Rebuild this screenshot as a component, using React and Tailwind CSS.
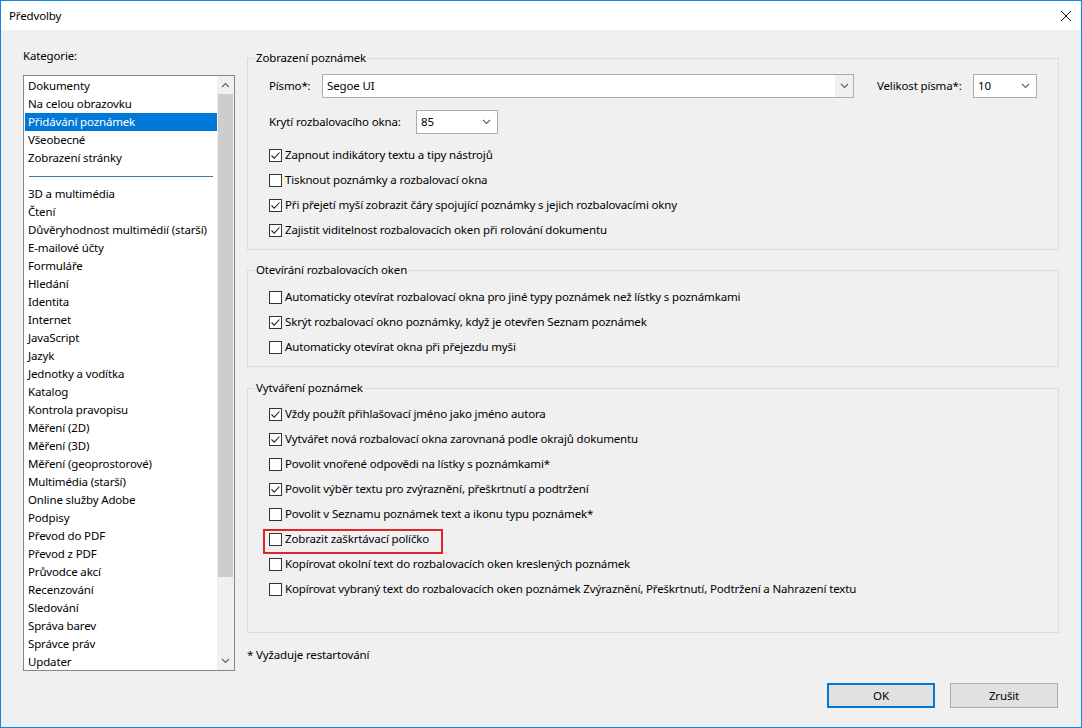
import React from "react";

const topItems = ["Dokumenty", "Na celou obrazovku", "Přidávání poznámek", "Všeobecné", "Zobrazení stránky"];

const otherItems = [
  "3D a multimédia",
  "Čtení",
  "Důvěryhodnost multimédií (starší)",
  "E-mailové účty",
  "Formuláře",
  "Hledání",
  "Identita",
  "Internet",
  "JavaScript",
  "Jazyk",
  "Jednotky a vodítka",
  "Katalog",
  "Kontrola pravopisu",
  "Měření (2D)",
  "Měření (3D)",
  "Měření (geoprostorové)",
  "Multimédia (starší)",
  "Online služby Adobe",
  "Podpisy",
  "Převod do PDF",
  "Převod z PDF",
  "Průvodce akcí",
  "Recenzování",
  "Sledování",
  "Správa barev",
  "Správce práv",
  "Updater",
];

// small chevron used in combos and the scrollbar
function Chevron({ up }) {
  return (
    <svg width="9" height="6" viewBox="0 0 9 6" className="block">
      <path
        d={up ? "M1 5 L4.5 1.5 L8 5" : "M1 1 L4.5 4.5 L8 1"}
        fill="none"
        stroke="#606060"
        strokeWidth="1.1"
      />
    </svg>
  );
}

function Checkbox({ checked, label }) {
  return (
    <div className="flex items-center h-[18px]">
      <div className="w-[13px] h-[13px] border border-[#333333] bg-white flex items-center justify-center shrink-0">
        {checked && (
          <svg width="11" height="11" viewBox="0 0 11 11" className="block">
            <path d="M1.5 5.5 L4.2 8.2 L9.5 2.5" fill="none" stroke="#222222" strokeWidth="1.1" />
          </svg>
        )}
      </div>
      <span className="ml-[3px] whitespace-nowrap">{label}</span>
    </div>
  );
}

function Select({ value, className }) {
  return (
    <div className={`h-[24px] border border-[#acacac] bg-white flex items-center justify-between pl-[4px] pr-[6px] ${className}`}>
      <span>{value}</span>
      <Chevron />
    </div>
  );
}

function Group({ title, className, children }) {
  return (
    <fieldset className={`border border-[#dcdcdc] ${className}`}>
      <legend className="ml-[7px] px-[1px] leading-[18px]">{title}</legend>
      {children}
    </fieldset>
  );
}

export default function App() {
  return (
    <div className="w-[1082px] h-[728px] border border-[#1883d7] bg-[#f0f0f0] flex flex-col text-[11.5px] tracking-[-0.15px] leading-[18px] text-black font-['Noto_Sans',sans-serif] overflow-hidden">
      {/* Title bar */}
      <div className="h-[29px] bg-white flex items-center justify-between pl-[8px] pr-[9px] shrink-0">
        <span>Předvolby</span>
        <svg width="12" height="12" viewBox="0 0 12 12" className="block">
          <path d="M1 1 L11 11 M11 1 L1 11" stroke="#111111" strokeWidth="1" />
        </svg>
      </div>

      <div className="flex pl-[22px] pt-[17px]">
        {/* Categories */}
        <div className="w-[212px] flex flex-col">
          <div className="h-[18px] mb-[10px]">Kategorie:</div>
          <div className="h-[596px] border border-[#828790] bg-white flex overflow-hidden">
            <div className="w-[193px] pt-[1px] overflow-hidden">
              {topItems.map((item, i) => (
                <div
                  key={item}
                  className={
                    i === 2
                      ? "h-[18px] ml-[1px] pl-[3px] bg-[#0078d7] text-white whitespace-nowrap"
                      : "h-[18px] pl-[4px] whitespace-nowrap"
                  }
                >
                  {item}
                </div>
              ))}
              <div className="h-[18px] flex items-center">
                <div className="ml-[5px] w-[184px] h-px bg-[#3a75b8]"></div>
              </div>
              {otherItems.map((item) => (
                <div key={item} className="h-[18px] pl-[4px] whitespace-nowrap">
                  {item}
                </div>
              ))}
            </div>
            <div className="w-[17px] bg-[#f0f0f0] flex flex-col">
              <div className="h-[18px] flex items-center justify-center">
                <Chevron up />
              </div>
              <div className="h-[483px] mx-[1px] bg-[#cdcdcd]"></div>
              <div className="flex-1"></div>
              <div className="h-[18px] flex items-center justify-center">
                <Chevron />
              </div>
            </div>
          </div>
        </div>

        {/* Settings */}
        <div className="w-[812px] ml-[12px] pt-[2px] flex flex-col">
          <Group title="Zobrazení poznámek">
            <div className="pl-[21px] pt-[7px] pb-[10px]">
              <div className="flex items-center h-[24px]">
                <span className="w-[53px]">Písmo*:</span>
                <div className="w-[532px] h-[24px] border border-[#acacac] bg-[#f0f0f0] flex">
                  <div className="flex-1 bg-white pl-[4px] flex items-center">Segoe UI</div>
                  <div className="w-[18px] flex items-center justify-center">
                    <Chevron />
                  </div>
                </div>
                <span className="ml-[23px] w-[96px] whitespace-nowrap">Velikost písma*:</span>
                <Select value="10" className="w-[64px]" />
              </div>
              <div className="flex items-center h-[24px] mt-[12px]">
                <span className="w-[147px] whitespace-nowrap">Krytí rozbalovacího okna:</span>
                <Select value="85" className="w-[82px]" />
              </div>
              <div className="mt-[12px] flex flex-col gap-[7px]">
                <Checkbox checked label="Zapnout indikátory textu a tipy nástrojů" />
                <Checkbox label="Tisknout poznámky a rozbalovací okna" />
                <Checkbox checked label="Při přejetí myší zobrazit čáry spojující poznámky s jejich rozbalovacími okny" />
                <Checkbox checked label="Zajistit viditelnost rozbalovacích oken při rolování dokumentu" />
              </div>
            </div>
          </Group>

          <Group title="Otevírání rozbalovacích oken" className="mt-[11px]">
            <div className="pl-[21px] pt-[9px] pb-[10px] flex flex-col gap-[7px]">
              <Checkbox label="Automaticky otevírat rozbalovací okna pro jiné typy poznámek než lístky s poznámkami" />
              <Checkbox checked label="Skrýt rozbalovací okno poznámky, když je otevřen Seznam poznámek" />
              <Checkbox label="Automaticky otevírat okna při přejezdu myši" />
            </div>
          </Group>

          <Group title="Vytváření poznámek" className="mt-[12px]">
            <div className="pl-[21px] pt-[8px] pb-[34px] flex flex-col gap-[7px]">
              <Checkbox checked label="Vždy použít přihlašovací jméno jako jméno autora" />
              <Checkbox checked label="Vytvářet nová rozbalovací okna zarovnaná podle okrajů dokumentu" />
              <Checkbox label="Povolit vnořené odpovědi na lístky s poznámkami*" />
              <Checkbox checked label="Povolit výběr textu pro zvýraznění, přeškrtnutí a podtržení" />
              <Checkbox label="Povolit v Seznamu poznámek text a ikonu typu poznámek*" />
              <div className="relative">
                <Checkbox label="Zobrazit zaškrtávací políčko" />
                <div className="absolute -left-[6px] -top-[1px] w-[180px] h-[25px] border-2 border-[#e0242c]"></div>
              </div>
              <Checkbox label="Kopírovat okolní text do rozbalovacích oken kreslených poznámek" />
              <Checkbox label="Kopírovat vybraný text do rozbalovacích oken poznámek Zvýraznění, Přeškrtnutí, Podtržení a Nahrazení textu" />
            </div>
          </Group>

          <div className="mt-[13px] h-[18px]">* Vyžaduje restartování</div>

          <div className="mt-[19px] flex justify-end gap-[15px] pr-[1px]">
            <button className="w-[108px] h-[25px] border-2 border-[#0078d7] bg-[#e1e1e1]">OK</button>
            <button className="w-[108px] h-[25px] border border-[#adadad] bg-[#e1e1e1]">Zrušit</button>
          </div>
        </div>
      </div>
    </div>
  );
}
